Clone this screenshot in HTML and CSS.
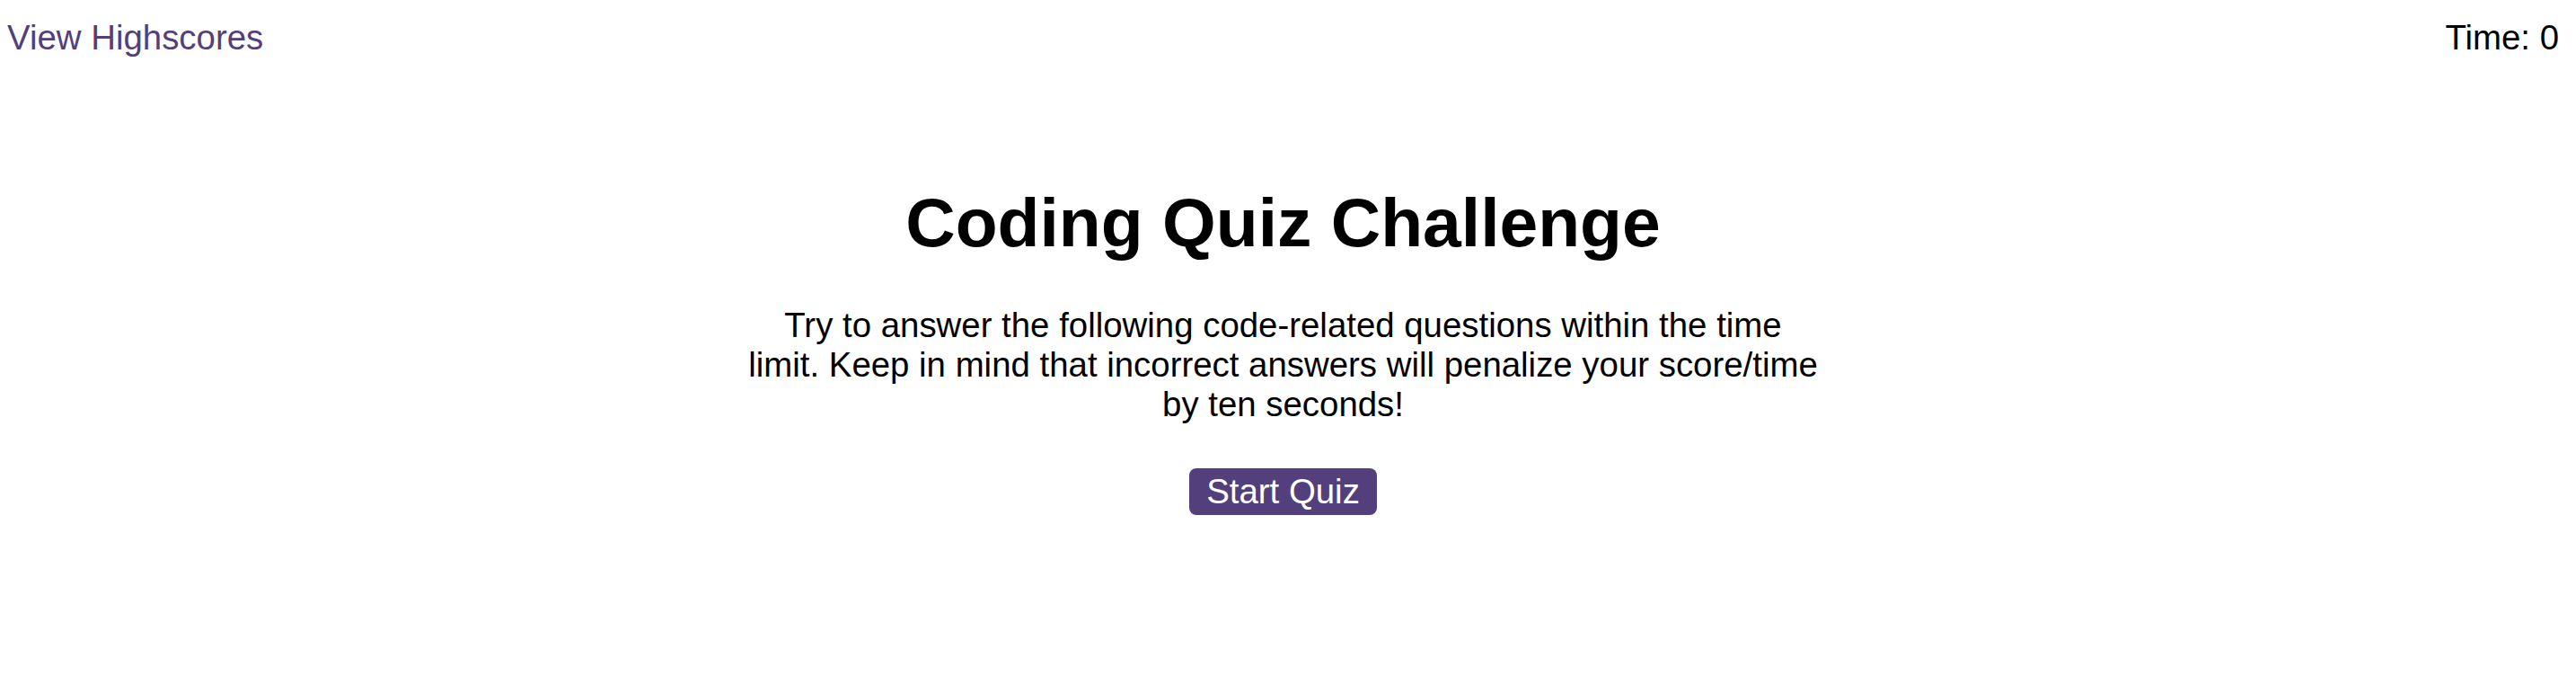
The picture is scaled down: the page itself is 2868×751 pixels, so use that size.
FILE: index.html
```html
<!DOCTYPE html>
<html lang="en">
<head>
<meta charset="utf-8">
<title>Coding Quiz Challenge</title>
<link rel="stylesheet" href="styles.css">
</head>
<body>
<header class="top-bar">
  <a class="highscores-link" href="#">View Highscores</a>
  <div class="timer">Time: <span class="timer-value">0</span></div>
</header>
<main class="intro">
  <h1 class="intro-title">Coding Quiz Challenge</h1>
  <p class="intro-text">Try to answer the following code-related questions within the time limit. Keep in mind that incorrect answers will penalize your score/time by ten seconds!</p>
  <button class="start-button" type="button">Start Quiz</button>
</main>
</body>
</html>
```

FILE: styles.css
```css
html, body {
  margin: 0;
  padding: 0;
  background: #ffffff;
}

body {
  font-family: "Liberation Sans", Arial, Helvetica, sans-serif;
  font-size: 38.4px;
  color: #000000;
}

.top-bar {
  display: flex;
  justify-content: space-between;
  align-items: flex-start;
  padding: 20px 19px 0 8px;
}

.highscores-link {
  color: #533f7b;
  text-decoration: none;
}

.timer {
  color: #000000;
}

.intro {
  display: flex;
  flex-direction: column;
  align-items: center;
  text-align: center;
  padding: 0 19px 0 8px;
}

.intro-title {
  font-size: 76.8px;
  font-weight: bold;
  margin: 139px 0 0;
}

.intro-text {
  width: 1192px;
  margin: 48px 0 0;
}

.start-button {
  margin-top: 49px;
  padding: 4px 19px;
  background: #533f7b;
  color: #ffffff;
  border: none;
  border-radius: 8px;
  font-family: inherit;
  font-size: 38.4px;
  line-height: normal;
  cursor: pointer;
}
```
